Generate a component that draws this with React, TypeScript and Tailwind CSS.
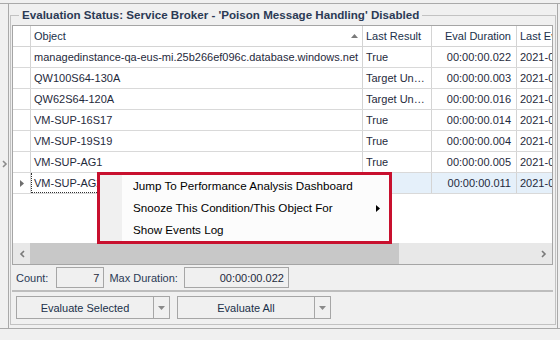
import React from "react";

const rows: [string, string, string][] = [
  ["managedinstance-qa-eus-mi.25b266ef096c.database.windows.net", "True", "00:00:00.022"],
  ["QW100S64-130A", "Target Un…", "00:00:00.003"],
  ["QW62S64-120A", "Target Un…", "00:00:00.016"],
  ["VM-SUP-16S17", "True", "00:00:00.014"],
  ["VM-SUP-19S19", "True", "00:00:00.004"],
  ["VM-SUP-AG1", "True", "00:00:00.005"],
  ["VM-SUP-AG2", "", "00:00:00.011"],
];

function SplitButton({ label }: { label: string }) {
  return (
    <div className="flex h-[23px]">
      <div className="w-[138px] border border-[#a6a6a6] flex items-center justify-center text-[#20304a]">{label}</div>
      <div className="w-[16px] border border-l-0 border-[#a6a6a6] flex items-center justify-center">
        <svg width="7" height="4" viewBox="0 0 7 4"><path d="M0 0h7L3.5 4z" fill="#8a8a8a" /></svg>
      </div>
    </div>
  );
}

export default function App() {
  return (
    <div className="w-[560px] h-[340px] bg-[#f0f0f0] overflow-hidden relative font-['Liberation_Sans',Arial,sans-serif] text-[11px] leading-[14px] text-[#1f2a3c]">
      <div className="mt-[3px] h-[326px] border-y border-[#a9a9a9] flex">
        <div className="w-[8px] flex items-center justify-start pl-[2px] pb-[4px]">
          <svg width="6" height="8" viewBox="0 0 6 8"><path d="M1 1l3 3-3 3" stroke="#8c8c8c" strokeWidth="1.6" fill="none" /></svg>
        </div>
        <div className="w-[550px] min-w-0 border-x border-[#a9a9a9] px-[1px]">
          <fieldset className="mt-[4px] h-[317px] w-[546px] min-w-0 border border-[#c2c2c2] pl-[1px] pr-[2px]">
            <legend className="ml-[7px] px-[3px] font-bold text-[11.6px] text-[#2b3a55] leading-[14px]">
              Evaluation Status: Service Broker - 'Poison Message Handling' Disabled
            </legend>
            <div className="mt-[3px] h-[240px] w-[541px] border border-[#a5a5a5] bg-white flex flex-col overflow-hidden">
              <div className="flex h-[21px] border-b border-[#d4d4d4] text-[#20304a] shrink-0">
                <div className="w-[18px] border-r border-[#d4d4d4] shrink-0" />
                <div className="w-[332px] border-r border-[#d4d4d4] shrink-0 flex items-center pl-[3px] pr-[4px] justify-between">
                  <span>Object</span>
                  <svg width="7" height="4" viewBox="0 0 7 4"><path d="M0 4h7L3.5 0z" fill="#7a7a7a" /></svg>
                </div>
                <div className="w-[69px] border-r border-[#d4d4d4] shrink-0 flex items-center pl-[3px]">Last Result</div>
                <div className="w-[85px] border-r border-[#d4d4d4] shrink-0 flex items-center justify-end pr-[5px]">Eval Duration</div>
                <div className="w-[60px] shrink-0 flex items-center pl-[3px] whitespace-nowrap">Last Eval</div>
              </div>
              {rows.map((r, i) => {
                const sel = i === 6;
                return (
                  <div key={i} className="flex h-[21px] border-b border-[#d9d9d9] shrink-0">
                    <div className="w-[18px] border-r border-[#d4d4d4] shrink-0 flex items-center justify-center">
                      {sel && (
                        <svg width="4" height="7" viewBox="0 0 4 7"><path d="M0 0v7l4-3.5z" fill="#6e6e6e" /></svg>
                      )}
                    </div>
                    <div
                      className={
                        "w-[332px] shrink-0 flex items-center whitespace-nowrap " +
                        (sel ? "border border-dotted border-[#333] border-t-0 pl-[2px]" : "border-r border-[#d4d4d4] pl-[3px]")
                      }
                    >
                      {r[0]}
                    </div>
                    <div className={"w-[69px] border-r border-[#d4d4d4] shrink-0 flex items-center pl-[3px] whitespace-nowrap " + (sel ? "bg-[#e5f0fa]" : "")}>{r[1]}</div>
                    <div className={"w-[85px] border-r border-[#d4d4d4] shrink-0 flex items-center justify-end pr-[5px] " + (sel ? "bg-[#e5f0fa]" : "")}>{r[2]}</div>
                    <div className={"w-[60px] shrink-0 flex items-center pl-[3px] whitespace-nowrap " + (sel ? "bg-[#e5f0fa]" : "")}>2021-04-</div>
                  </div>
                );
              })}
              <div className="flex-1" />
              <div className="h-[21px] shrink-0 flex bg-[#e8e8e8]">
                <div className="w-[17px] flex items-center justify-center">
                  <svg width="6" height="8" viewBox="0 0 6 8"><path d="M5 1L2 4l3 3" stroke="#7a7a7a" strokeWidth="1.6" fill="none" /></svg>
                </div>
                <div className="w-[369px] bg-[#c8c8c8]" />
                <div className="flex-1" />
                <div className="w-[17px] flex items-center justify-center">
                  <svg width="6" height="8" viewBox="0 0 6 8"><path d="M1 1l3 3-3 3" stroke="#7a7a7a" strokeWidth="1.6" fill="none" /></svg>
                </div>
              </div>
            </div>
            <div className="h-[27px] w-[541px] border-b-2 border-[#bdbdbd] flex items-center pl-[4px] text-[#2b3a55]">
              <span>Count:</span>
              <div className="ml-[8px] w-[48px] h-[21px] border border-[#a6a6a6] flex items-center justify-end pr-[4px] text-[#1f2a3c]">7</div>
              <span className="ml-[5px]">Max Duration:</span>
              <div className="ml-[6px] w-[105px] h-[21px] border border-[#a6a6a6] flex items-center justify-end pr-[4px] text-[#1f2a3c]">00:00:00.022</div>
            </div>
            <div className="flex gap-[7px] pl-[4px] pt-[4px]">
              <SplitButton label="Evaluate Selected" />
              <SplitButton label="Evaluate All" />
            </div>
          </fieldset>
        </div>
      </div>

      <div className="absolute left-[97px] top-[172px] w-[295px] border-[3px] border-[#c8102e] bg-[#fcfcfc] text-black text-[11.65px] flex">
        <div className="w-[22px] bg-[#f0f0f0] shrink-0" />
        <div className="flex-1">
          <div className="h-[22px] flex items-center pl-[11px]">Jump To Performance Analysis Dashboard</div>
          <div className="h-[22px] flex items-center pl-[11px] justify-between pr-[9px]">
            <span>Snooze This Condition/This Object For</span>
            <svg width="4" height="7" viewBox="0 0 4 7"><path d="M0 0v7l4-3.5z" fill="#000" /></svg>
          </div>
          <div className="h-[22px] flex items-center pl-[11px]">Show Events Log</div>
        </div>
      </div>
    </div>
  );
}
